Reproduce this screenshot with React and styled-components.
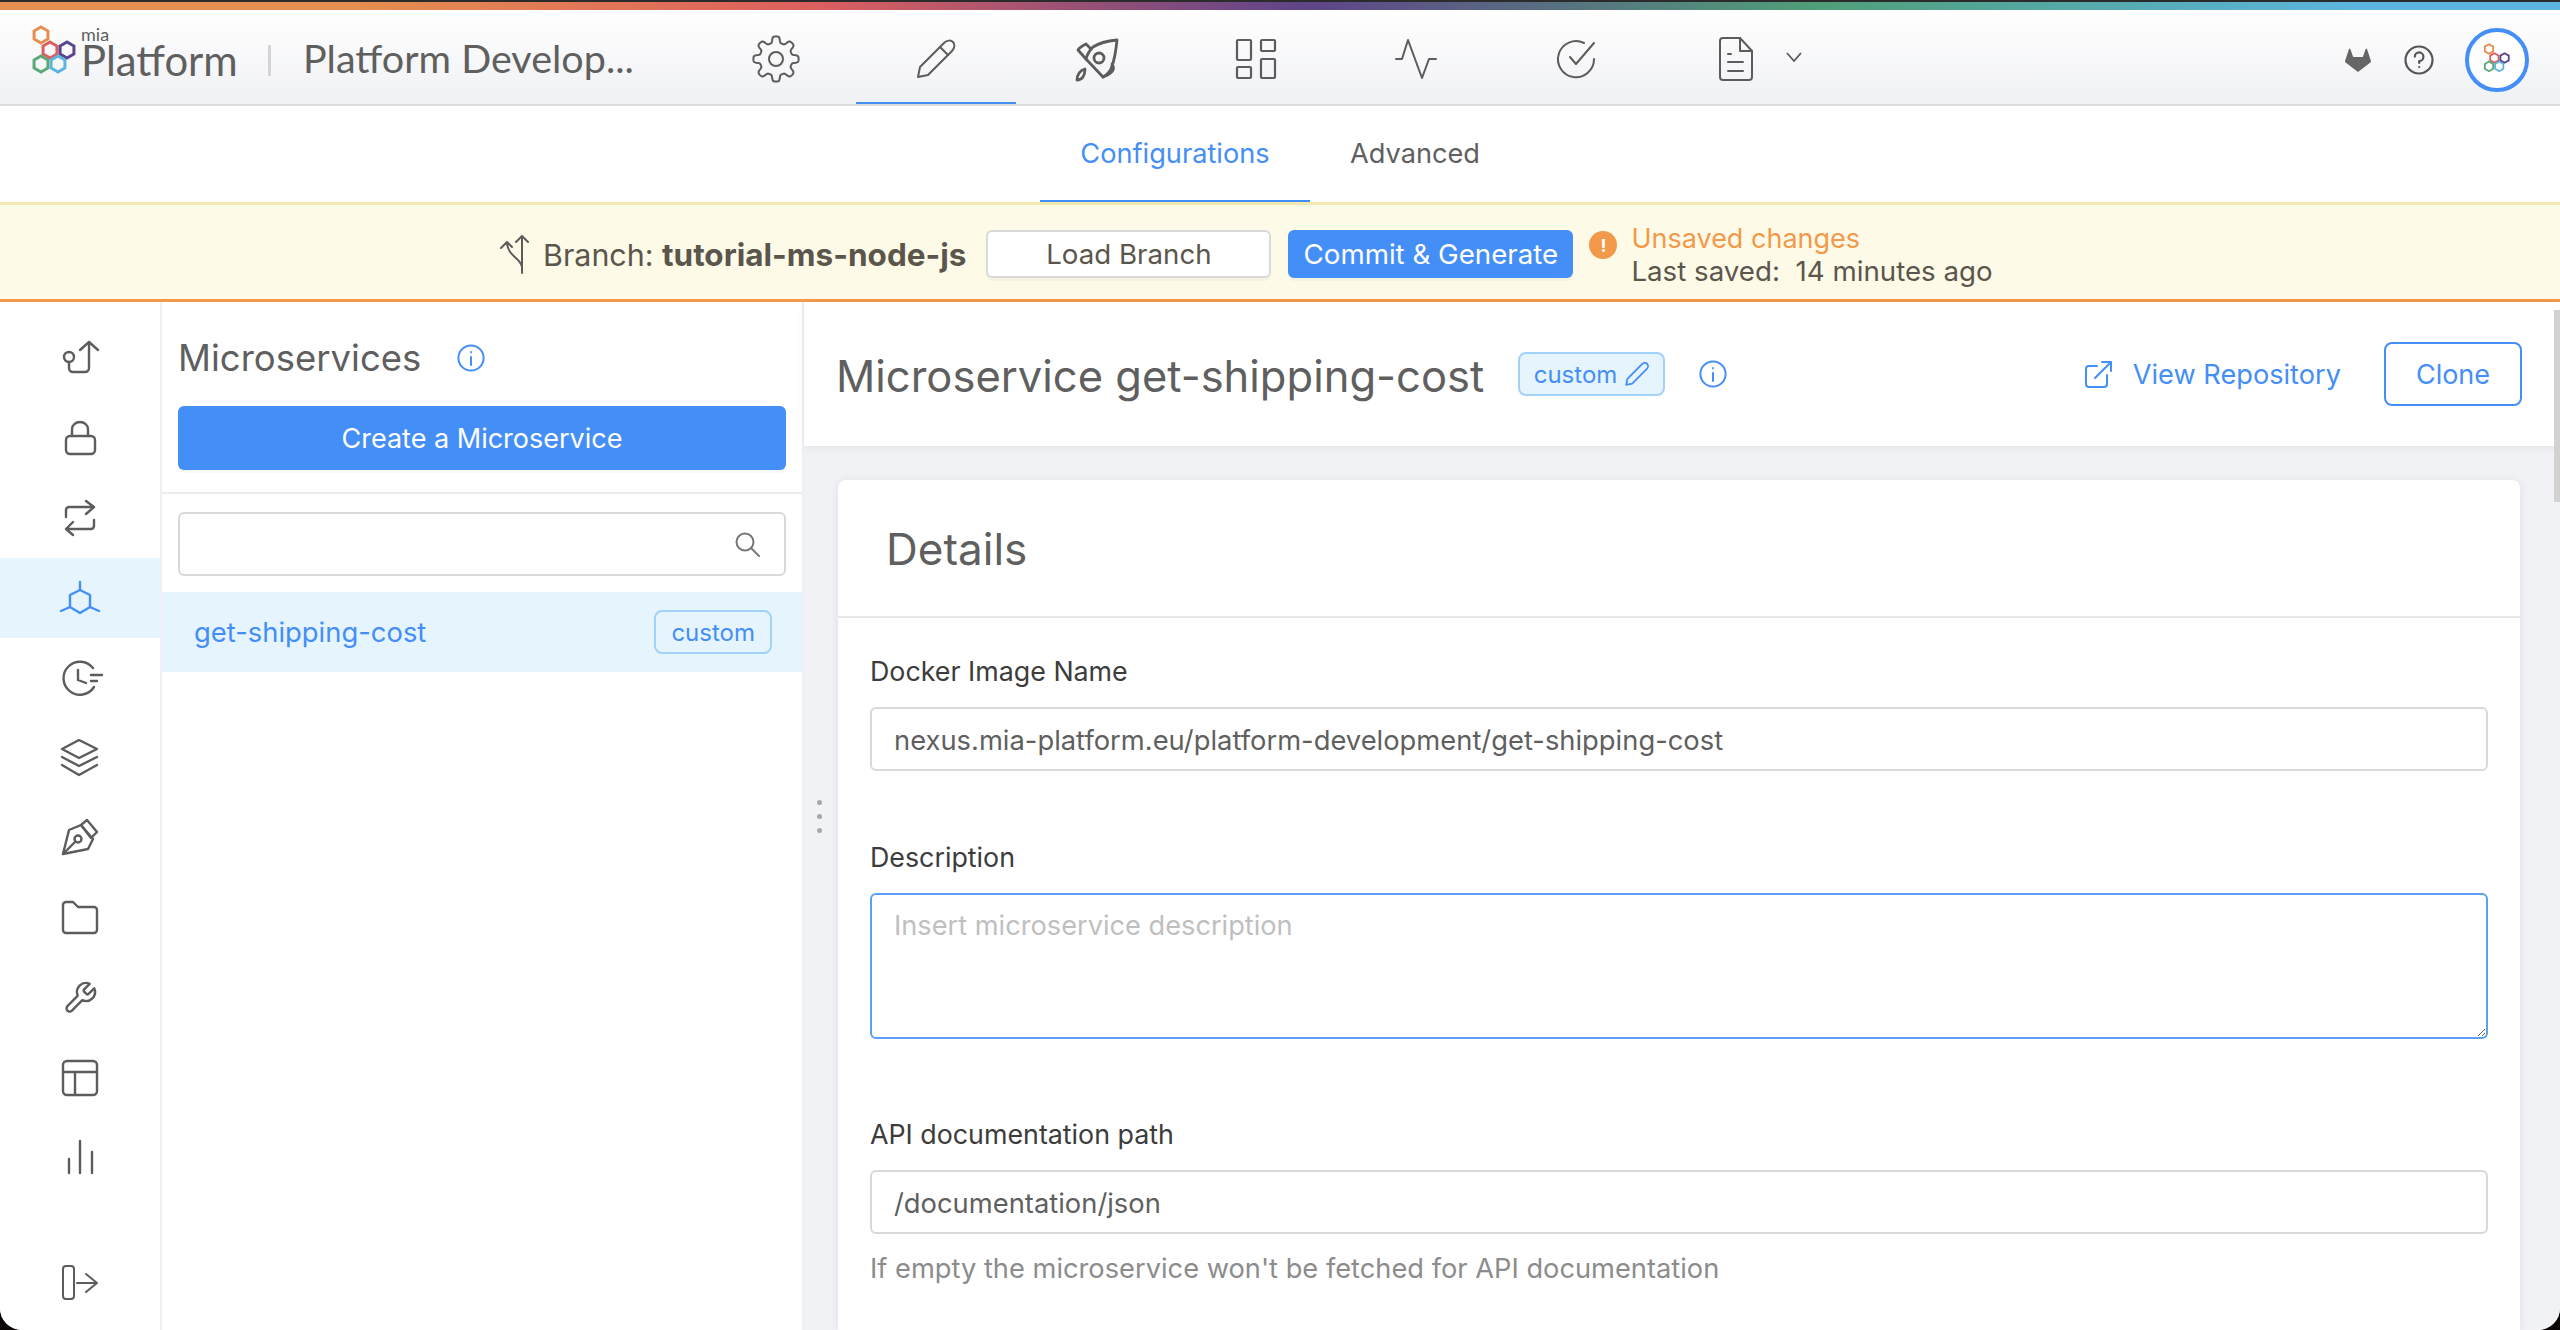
import React from 'react'
import styled, { createGlobalStyle } from 'styled-components'

const BLUE = '#448ef7'
const GREY = '#5f5f5f'

const GlobalStyle = createGlobalStyle`
    html, body {
        margin: 0;
        padding: 0;
        background: #0d0606;
    }
    * {
        box-sizing: border-box;
    }
    body {
        font-family: Inter, "Liberation Sans", sans-serif;
        color: ${GREY};
    }
`

const Page = styled.div`
    width: 2560px;
    height: 1330px;
    display: flex;
    flex-direction: column;
    overflow: hidden;
    background: #fff;
    border-radius: 0 0 22px 22px;
    position: relative;
`
const TopEdge = styled.div`
    height: 2px;
    flex: none;
    background: #2b2b2b;
`
const Rainbow = styled.div`
    height: 8px;
    flex: none;
    background: linear-gradient(90deg, #e58e4f 0%, #e58e4f 14%, #dc5f5f 32%, #5f4489 51%, #4f9f78 71%, #5cb5de 92%);
`
const Header = styled.header`
    height: 96px;
    flex: none;
    display: flex;
    align-items: center;
    background: linear-gradient(180deg, #ffffff 0%, #f0f1f4 100%);
    border-bottom: 2px solid #dcdcdc;
`
const Logo = styled.div`
    width: 268px;
    flex: none;
    padding-left: 31px;
    margin-bottom: 10px;
    display: flex;
    align-items: center;
    gap: 2px;
`
const LogoText = styled.div`
    display: flex;
    flex-direction: column;
    margin-top: -2px;
    font-family: Lato, sans-serif;
    color: ${GREY};
`
const LogoSmall = styled.span`
    font-size: 18px;
    line-height: 18px;
`
const LogoBig = styled.span`
    font-size: 41.8px;
    line-height: 35px;
`
const Divider = styled.div`
    width: 3px;
    height: 31px;
    flex: none;
    margin-top: 6px;
    background: #d4d4d4;
`
const ProjectName = styled.div`
    width: 389px;
    flex: none;
    padding-left: 32px;
    font-family: Lato, sans-serif;
    font-size: 39.5px;
    white-space: nowrap;
    color: ${GREY};
`
const Nav = styled.nav`
    display: flex;
    height: 100%;
    margin-left: 36px;
`
const NavItem = styled.div`
    width: 160px;
    height: 100%;
    display: flex;
    align-items: center;
    justify-content: center;
    padding-top: 6px;
    position: relative;
    border-bottom: 2px solid ${p => (p.$active ? BLUE : 'transparent')};
    margin-bottom: -2px;
`
const NavChevron = styled.svg`
    position: absolute;
    left: 130px;
    top: 42px;
`
const HeaderRight = styled.div`
    margin-left: auto;
    display: flex;
    align-items: center;
    gap: 33px;
    padding: 5px 31px 0 0;
`
const Avatar = styled.div`
    width: 64px;
    height: 64px;
    margin-left: -2px;
    border-radius: 50%;
    border: 4px solid ${BLUE};
    background: #fff;
    display: flex;
    align-items: center;
    justify-content: center;
`
const Tabs = styled.div`
    height: 96px;
    flex: none;
    display: flex;
    justify-content: center;
`
const Tab = styled.div`
    height: 100%;
    width: ${p => p.$width}px;
    display: flex;
    align-items: center;
    justify-content: center;
    font-size: 27.2px;
    color: ${p => (p.$active ? BLUE : GREY)};
    border-bottom: 2px solid ${p => (p.$active ? BLUE : 'transparent')};
`
const Banner = styled.div`
    height: 100px;
    flex: none;
    display: flex;
    align-items: center;
    padding: 4px 0 0 499px;
    background: #fefaE8;
    border-top: 3px solid #f6e9ae;
    border-bottom: 3px solid #f2994a;
`
const BranchLabel = styled.div`
    margin-left: 12px;
    font-size: 30.4px;
    white-space: nowrap;
    color: #5b564c;
    b {
        font-size: 31.5px;
        font-weight: 700;
    }
`
const BannerButton = styled.div`
    width: 285px;
    height: 48px;
    margin-left: ${p => p.$gap}px;
    display: flex;
    align-items: center;
    justify-content: center;
    font-size: 27.7px;
    white-space: nowrap;
    border-radius: 6px;
    color: ${p => (p.$primary ? '#fff' : '#5b564c')};
    background: ${p => (p.$primary ? BLUE : '#fff')};
    border: 2px solid ${p => (p.$primary ? BLUE : '#d9d9d9')};
    box-shadow: 0 3px 0 rgba(0, 0, 0, 0.03);
`
const AlertDot = styled.span`
    width: 28px;
    height: 28px;
    flex: none;
    align-self: flex-start;
    margin: 22px 0 0 16px;
    border-radius: 50%;
    background: #f2994a;
    color: #fff;
    font-size: 18px;
    font-weight: 700;
    display: flex;
    align-items: center;
    justify-content: center;
`
const SaveInfo = styled.div`
    margin: 1px 0 0 14px;
    display: flex;
    flex-direction: column;
    font-size: 27.7px;
    line-height: 33px;
    white-space: pre;
    color: #5b564c;
`
const Unsaved = styled.span`
    font-size: 27px;
    color: #f2994a;
`
const Main = styled.div`
    flex: 1;
    min-height: 0;
    display: flex;
`
const Sidebar = styled.aside`
    width: 162px;
    flex: none;
    display: flex;
    flex-direction: column;
    padding: 16px 0 7px 0;
    background: #fff;
    border-right: 2px solid #eef0f6;
`
const SideItem = styled.div`
    height: 80px;
    flex: none;
    display: flex;
    align-items: center;
    justify-content: center;
    background: ${p => (p.$active ? '#e6f4fe' : 'transparent')};
    margin-top: ${p => (p.$bottom ? 'auto' : '0')};
`
const Icon = styled.svg`
    flex: none;
    overflow: visible;
    fill: none;
    stroke: ${p => p.$color || '#5c5c5c'};
    stroke-width: ${p => p.$weight || 2.4};
    stroke-linecap: round;
    stroke-linejoin: round;
`
const ListPanel = styled.section`
    width: 642px;
    flex: none;
    display: flex;
    flex-direction: column;
    background: #fff;
    border-right: 2px solid #eef0f6;
`
const ListTop = styled.div`
    padding: 32px 16px 22px 16px;
    border-bottom: 2px solid #ececec;
`
const ListTitleRow = styled.div`
    display: flex;
    align-items: center;
    height: 48px;
    margin-bottom: 24px;
`
const ListTitle = styled.h2`
    margin: 0 36px 0 0;
    font-size: 36.5px;
    font-weight: 400;
    color: ${GREY};
`
const CreateButton = styled.div`
    height: 64px;
    display: flex;
    align-items: center;
    justify-content: center;
    font-size: 27px;
    color: #fff;
    background: ${BLUE};
    border-radius: 6px;
    box-shadow: 0 3px 0 rgba(0, 0, 0, 0.03);
`
const SearchWrap = styled.div`
    padding: 18px 16px 16px;
    position: relative;
`
const SearchInput = styled.input`
    width: 100%;
    height: 64px;
    display: block;
    border: 2px solid #d9d9d9;
    border-radius: 6px;
    outline: none;
    background: #fff;
`
const SearchIcon = styled.span`
    position: absolute;
    right: 42px;
    top: 37px;
    display: flex;
`
const ListRow = styled.div`
    height: 80px;
    display: flex;
    align-items: center;
    justify-content: space-between;
    padding: 0 30px 0 32px;
    background: #e6f4fe;
    color: ${BLUE};
    font-size: 27.4px;
`
const Tag = styled.div`
    height: 44px;
    padding: 0 ${p => (p.$edit ? 14 : 15)}px;
    display: flex;
    align-items: center;
    gap: 8px;
    font-size: 24px;
    color: ${BLUE};
    border: 2px solid #a0d2fb;
    border-radius: 8px;
    background: #e6f4fe;
`
const Grip = styled.div`
    position: absolute;
    left: 817px;
    top: 800px;
    display: flex;
    flex-direction: column;
    gap: 9px;
`
const GripDot = styled.span`
    width: 5px;
    height: 5px;
    border-radius: 50%;
    background: #a8a8a8;
`
const Detail = styled.section`
    flex: 1;
    min-width: 0;
    display: flex;
    flex-direction: column;
    background: #f0f2f5;
`
const DetailHeader = styled.div`
    height: 144px;
    flex: none;
    display: flex;
    align-items: center;
    padding: 0 38px 0 32px;
    background: #fff;
    box-shadow: 0 2px 8px rgba(0, 0, 0, 0.06);
    position: relative;
`
const DetailTitle = styled.h1`
    margin: 3px 33.5px 0 0;
    font-size: 43.5px;
    font-weight: 400;
    white-space: nowrap;
    color: ${GREY};
`
const InfoSpot = styled.span`
    display: flex;
    margin-left: 34px;
`
const RepoLink = styled.div`
    margin-left: auto;
    display: flex;
    align-items: center;
    gap: 21px;
    font-size: 27.2px;
    color: ${BLUE};
`
const CloneButton = styled.div`
    width: 138px;
    height: 64px;
    margin-left: 43px;
    display: flex;
    align-items: center;
    justify-content: center;
    font-size: 27px;
    color: ${BLUE};
    background: #fff;
    border: 2px solid ${BLUE};
    border-radius: 8px;
`
const Card = styled.div`
    flex: 1;
    margin: 34px 40px 0 34px;
    background: #fff;
    border-radius: 8px 8px 0 0;
    box-shadow: 0 1px 10px rgba(0, 0, 0, 0.08);
`
const CardHeader = styled.div`
    height: 138px;
    display: flex;
    align-items: center;
    padding: 2px 0 0 48px;
    font-size: 44px;
    color: ${GREY};
    border-bottom: 2px solid #e8e8e8;
`
const CardBody = styled.div`
    padding: 36px 32px 0;
`
const Field = styled.div`
    margin-top: ${p => p.$top || 0}px;
`
const Label = styled.label`
    display: block;
    height: 34px;
    line-height: 34px;
    margin-bottom: 19px;
    font-size: 26.8px;
    color: #3c3c3c;
`
const TextInput = styled.input`
    width: 100%;
    height: 64px;
    display: block;
    padding: 3px 22px 0;
    font: 400 27.35px Inter, sans-serif;
    color: #5f5f5f;
    background: #fff;
    border: 2px solid #d9d9d9;
    border-radius: 6px;
    outline: none;
`
const TextArea = styled.textarea`
    width: 100%;
    height: 146px;
    display: block;
    padding: 14px 22px;
    font: 400 27.2px Inter, sans-serif;
    color: #5f5f5f;
    background: #fff;
    border: 2px solid #5ca0f5;
    border-radius: 6px;
    outline: none;
    resize: vertical;
    &::placeholder {
        color: #bfbfbf;
    }
`
const Hint = styled.div`
    margin-top: 18px;
    font-size: 27.25px;
    color: #8c8c8c;
`
const ScrollThumb = styled.div`
    position: absolute;
    right: 0;
    top: 310px;
    width: 6px;
    height: 192px;
    background: #d2d2d2;
`

const Hexes = ({ scale = 1 }) => {
    const hex = (x, y, color) => {
        const r = 8
        const h = r * 0.866
        return (
            <polygon
                key={color}
                points={`${x},${y - r} ${x + h},${y - r / 2} ${x + h},${y + r / 2} ${x},${y + r} ${x - h},${y + r / 2} ${x - h},${y - r / 2}`}
                fill="none"
                stroke={color}
                strokeWidth="3"
            />
        )
    }
    return (
        <svg width={48 * scale} height={54 * scale} viewBox="0 0 48 54">
            {hex(10, 10, '#e58e4f')}
            {hex(19, 25, '#d9605f')}
            {hex(36, 25, '#5a4490')}
            {hex(10, 39, '#5aa876')}
            {hex(27, 39, '#5cb5de')}
        </svg>
    )
}

// outline of the gear, sampled so the lobes come out round
const gearPath = (() => {
    const pts = []
    for (let i = 0; i < 240; i++) {
        const a = (i / 240) * Math.PI * 2
        const r = 19.5 + 3.2 * Math.tanh(2.2 * Math.cos(a * 8))
        pts.push(`${(23 + r * Math.sin(a)).toFixed(2)} ${(23 - r * Math.cos(a)).toFixed(2)}`)
    }
    return `M${pts.join('L')}Z`
})()

const GearIcon = () => (
    <Icon width="46" height="46" viewBox="0 0 46 46" $weight="2">
        <path d={gearPath} />
        <circle cx="23" cy="23" r="7" />
    </Icon>
)
const PencilIcon = () => (
    <Icon width="40" height="40" viewBox="0 0 40 40" $weight="2">
        <path d="M2 38 L4 28 L28 4 C31 1 35 1 37 3 C39 5 39 9 36 12 L12 36 Z" />
        <path d="M24 8 L32 16" />
    </Icon>
)
const RocketIcon = () => (
    <Icon width="72" height="66" viewBox="0 0 72 66" $weight="2.8">
        <path d="M57 14 C47 15 39 17 33 21 C29 25 27 29 26 33 L43 51 C48 48 51 44 52 40 C55 32 56 24 57 14 Z" />
        <path d="M31 23 L26 18 C22 20 19 22 18 24 L26 33" />
        <path d="M52 38 C55 42 54 47 43 51" />
        <path d="M25 43 C20 44 17 49 17 54 C22 54 25 50 25 43 Z" />
        <circle cx="39" cy="32" r="5" />
    </Icon>
)
const BoardIcon = () => (
    <Icon width="40" height="40" viewBox="0 0 40 40" $weight="2.2">
        <rect x="1" y="1" width="14" height="20" rx="1" />
        <rect x="25" y="1" width="14" height="11" rx="1" />
        <rect x="1" y="28" width="14" height="11" rx="1" />
        <rect x="25" y="20" width="14" height="19" rx="1" />
    </Icon>
)
const PulseIcon = () => (
    <Icon width="42" height="40" viewBox="0 0 42 40" $weight="2">
        <path d="M1 20 H7 L13 1 L27 39 L34 20 H41" />
    </Icon>
)
const CheckIcon = () => (
    <Icon width="40" height="40" viewBox="0 0 40 40" $weight="2">
        <path d="M28 4 A18 18 0 1 0 38 20" />
        <path d="M14 18 L20 25 L38 4" />
    </Icon>
)
const DocIcon = () => (
    <Icon width="34" height="44" viewBox="0 0 34 44" $weight="2">
        <path d="M4 1 H21 L33 14 V40 a3 3 0 0 1 -3 3 H4 a3 3 0 0 1 -3 -3 V4 a3 3 0 0 1 3 -3 Z" />
        <path d="M21 1 V14 H33" />
        <path d="M9 17 H12 M9 25 H24 M9 34 H24" />
    </Icon>
)
const GitlabIcon = () => (
    <svg width="26" height="24" viewBox="0 0 26 24">
        <path d="M13 24 L0.6 14.5 C0 14 0 13 0.2 12.4 L4 1 C4.3 0.2 5 0.2 5.3 1 L8.2 9 H17.8 L20.7 1 C21 0.2 21.7 0.2 22 1 L25.8 12.4 C26 13 26 14 25.4 14.5 Z" fill="#666" />
    </svg>
)
const HelpIcon = () => (
    <Icon width="30" height="30" viewBox="0 0 30 30" $weight="2.2" $color="#555">
        <circle cx="15" cy="15" r="13.5" />
        <path d="M10.8 11.6 A4.3 4.3 0 1 1 15.2 16 V18" />
        <path d="M15.2 22 V22.1" />
    </Icon>
)
const InfoIcon = ({ size = 28 }) => (
    <Icon width={size} height={size} viewBox="0 0 28 28" $weight="2" $color={BLUE}>
        <circle cx="14" cy="14" r="12.6" />
        <path d="M14 13 V21" />
        <path d="M14 8 V8.2" />
    </Icon>
)
const BranchMark = () => (
    <Icon width="32" height="40" viewBox="0 0 32 40" $weight="2">
        <path d="M23 39 V2 M17 8 L23 2 L29 8" />
        <path d="M2 14 L8 8 L13 13 M8 8 C8 22 22 24 23 33" />
    </Icon>
)

const sideIcons = [
    <>
        <circle cx="9" cy="19" r="5" />
        <path d="M9 24 V30 a4 4 0 0 0 4 4 H25 a4 4 0 0 0 4 -4 V4 M20 12 L29 4 L38 12" />
    </>,
    <>
        <rect x="6" y="18" width="29" height="18" rx="4" />
        <path d="M12 18 V11 a8 7 0 0 1 16 0 V18" />
    </>,
    <path d="M6 19 V12 a3 3 0 0 1 3 -3 H34 M26 3 L34 9 L26 16 M34 22 V28 a3 3 0 0 1 -3 3 H6 M13 24 L6 31 L13 37" />,
    <path d="M20 12 L30 17 V29 L20 35 L10 29 V17 Z M20 4 V12 M30 29 L39 33 M10 29 L1 33" />,
    <>
        <path d="M33 10 A16.5 16.5 0 1 0 34 29" />
        <path d="M18 12 V22 L26 25 M31 17 H42 M31 23 H37" />
    </>,
    <path d="M19 2 L37 11 L19 20 L2 11 Z M2 19 L19 28 L37 19 M2 27 L19 37 L37 27" />,
    <>
        <path d="M3 36 L9 12 L21 7 L33 21 L28 31 Z" />
        <path d="M21 7 L27 2 L37 14 L31 20 Z" />
        <circle cx="18" cy="21" r="3.5" />
        <path d="M3 36 L15.5 23.5" />
    </>,
    <path d="M3 7 a3 3 0 0 1 3 -3 H13 L18 9 H34 a3 3 0 0 1 3 3 V32 a3 3 0 0 1 -3 3 H6 a3 3 0 0 1 -3 -3 Z" />,
    <g transform="translate(2 2) scale(1.5)" strokeWidth="1.6">
        <path d="M14.7 6.3a1 1 0 0 0 0 1.4l1.6 1.6a1 1 0 0 0 1.4 0l3.77-3.77a6 6 0 0 1-7.94 7.94l-6.91 6.91a2.12 2.12 0 0 1-3-3l6.91-6.91a6 6 0 0 1 7.94-7.94l-3.76 3.76z" />
    </g>,
    <>
        <rect x="3" y="3" width="34" height="34" rx="4" />
        <path d="M3 14 H37 M15 14 V37" />
    </>,
    <path d="M9 21 V35 M20 3 V35 M32 14 V35" />,
]

const App = () => {
    return (
        <Page>
            <GlobalStyle />
            <TopEdge />
            <Rainbow />
            <Header>
                <Logo>
                    <Hexes />
                    <LogoText>
                        <LogoSmall>mia</LogoSmall>
                        <LogoBig>Platform</LogoBig>
                    </LogoText>
                </Logo>
                <Divider />
                <ProjectName>Platform Develop...</ProjectName>
                <Nav>
                    <NavItem><GearIcon /></NavItem>
                    <NavItem $active><PencilIcon /></NavItem>
                    <NavItem><RocketIcon /></NavItem>
                    <NavItem><BoardIcon /></NavItem>
                    <NavItem><PulseIcon /></NavItem>
                    <NavItem><CheckIcon /></NavItem>
                    <NavItem>
                        <DocIcon />
                        <NavChevron width="16" height="10" viewBox="0 0 16 10" fill="none" stroke="#5c5c5c" strokeWidth="1.8">
                            <path d="M1 1 L8 9 L15 1" />
                        </NavChevron>
                    </NavItem>
                </Nav>
                <HeaderRight>
                    <GitlabIcon />
                    <HelpIcon />
                    <Avatar><Hexes scale={0.6} /></Avatar>
                </HeaderRight>
            </Header>
            <Tabs>
                <Tab $width={270} $active>Configurations</Tab>
                <Tab $width={210}>Advanced</Tab>
            </Tabs>
            <Banner>
                <BranchMark />
                <BranchLabel>Branch: <b>tutorial-ms-node-js</b></BranchLabel>
                <BannerButton $gap={20}>Load Branch</BannerButton>
                <BannerButton $gap={17} $primary>Commit &amp; Generate</BannerButton>
                <AlertDot>!</AlertDot>
                <SaveInfo>
                    <Unsaved>Unsaved changes</Unsaved>
                    <span>Last saved:  14 minutes ago</span>
                </SaveInfo>
            </Banner>
            <Main>
                <Sidebar>
                    {sideIcons.map((icon, i) => (
                        <SideItem key={i} $active={i === 3}>
                            <Icon width="40" height="40" viewBox="0 0 40 40" $color={i === 3 ? BLUE : undefined}>
                                {icon}
                            </Icon>
                        </SideItem>
                    ))}
                    <SideItem $bottom>
                        <Icon width="40" height="40" viewBox="0 0 40 40" $weight="2">
                            <rect x="3" y="3" width="11" height="33" rx="3" />
                            <path d="M17 20 H37 M26 11 L37 20 L26 29" />
                        </Icon>
                    </SideItem>
                </Sidebar>
                <ListPanel>
                    <ListTop>
                        <ListTitleRow>
                            <ListTitle>Microservices</ListTitle>
                            <InfoIcon />
                        </ListTitleRow>
                        <CreateButton>Create a Microservice</CreateButton>
                    </ListTop>
                    <SearchWrap>
                        <SearchInput />
                        <SearchIcon>
                            <Icon width="26" height="26" viewBox="0 0 26 26" $weight="2" $color="#777">
                                <circle cx="11" cy="11" r="8.5" />
                                <path d="M17 17 L25 25" />
                            </Icon>
                        </SearchIcon>
                    </SearchWrap>
                    <ListRow>
                        get-shipping-cost
                        <Tag>custom</Tag>
                    </ListRow>
                </ListPanel>
                <Detail>
                    <DetailHeader>
                        <DetailTitle>Microservice get-shipping-cost</DetailTitle>
                        <Tag $edit>
                            custom
                            <Icon width="24" height="24" viewBox="0 0 40 40" $weight="3" $color={BLUE}>
                                <path d="M2 38 L4 28 L28 4 C31 1 35 1 37 3 C39 5 39 9 36 12 L12 36 Z" />
                            </Icon>
                        </Tag>
                        <InfoSpot><InfoIcon /></InfoSpot>
                        <RepoLink>
                            <Icon width="27" height="27" viewBox="0 0 27 27" $weight="2" $color={BLUE}>
                                <path d="M12 5 H4 a3 3 0 0 0 -3 3 V23 a3 3 0 0 0 3 3 H19 a3 3 0 0 0 3 -3 V14" />
                                <path d="M10 17 L26 1 M17 1 H26 V10" />
                            </Icon>
                            View Repository
                        </RepoLink>
                        <CloneButton>Clone</CloneButton>
                    </DetailHeader>
                    <Card>
                        <CardHeader>Details</CardHeader>
                        <CardBody>
                            <Field>
                                <Label>Docker Image Name</Label>
                                <TextInput readOnly value="nexus.mia-platform.eu/platform-development/get-shipping-cost" />
                            </Field>
                            <Field $top={69}>
                                <Label>Description</Label>
                                <TextArea placeholder="Insert microservice description" />
                            </Field>
                            <Field $top={78}>
                                <Label>API documentation path</Label>
                                <TextInput readOnly value="/documentation/json" />
                                <Hint>If empty the microservice won't be fetched for API documentation</Hint>
                            </Field>
                        </CardBody>
                    </Card>
                </Detail>
            </Main>
            <Grip>
                <GripDot />
                <GripDot />
                <GripDot />
            </Grip>
            <ScrollThumb />
        </Page>
    )
}

export default App
